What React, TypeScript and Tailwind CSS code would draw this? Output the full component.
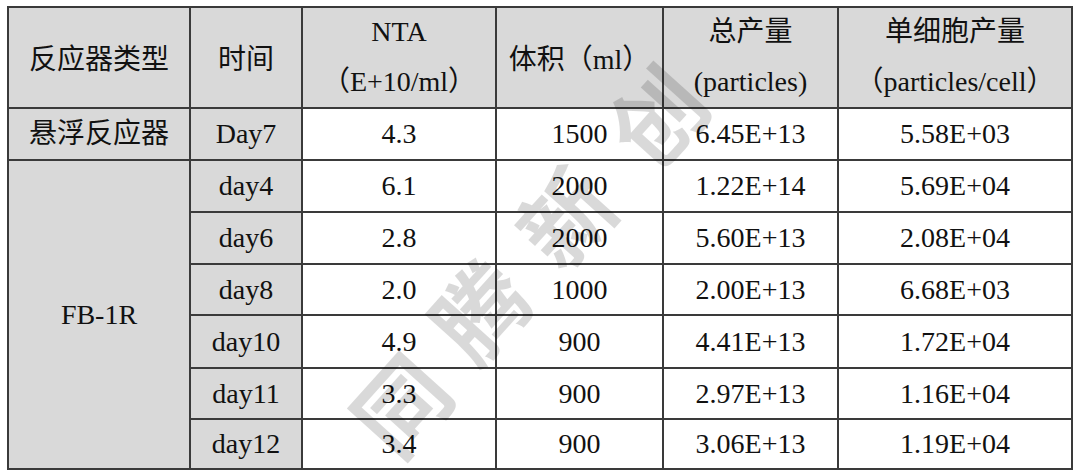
import React from "react";

const font = "font-['Liberation_Serif','Noto_Sans_CJK_SC',serif]";

const rows = [
  { t: "day4", n: "6.1", v: "2000", p: "1.22E+14", c: "5.69E+04", h: "h-[52px]" },
  { t: "day6", n: "2.8", v: "2000", p: "5.60E+13", c: "2.08E+04", h: "h-[52px]" },
  { t: "day8", n: "2.0", v: "1000", p: "2.00E+13", c: "6.68E+03", h: "h-[51px]" },
  { t: "day10", n: "4.9", v: "900", p: "4.41E+13", c: "1.72E+04", h: "h-[53px]" },
  { t: "day11", n: "3.3", v: "900", p: "2.97E+13", c: "1.16E+04", h: "h-[51px]" },
  { t: "day12", n: "3.4", v: "900", p: "3.06E+13", c: "1.19E+04", h: "h-[50px]" },
];

const td = "border-2 border-[#3a3a3a] p-0 text-center align-middle whitespace-nowrap";
const gray = "bg-[#d9d9d9]";

const marks = [
  { ch: "同", x: 398, y: 402 },
  { ch: "腾", x: 477, y: 308 },
  { ch: "新", x: 563, y: 214 },
  { ch: "创", x: 654, y: 114 },
];

export default function App() {
  return (
    <div className={`relative w-[1080px] h-[473px] bg-white overflow-hidden ${font} text-[#111]`}>
      <div className="pt-[6px] pl-[7px]">
        <table className="border-collapse table-fixed w-[1064px] text-[28px]">
          <colgroup>
            <col className="w-[182px]" />
            <col className="w-[112px]" />
            <col className="w-[194px]" />
            <col className="w-[167px]" />
            <col className="w-[175px]" />
            <col className="w-[234px]" />
          </colgroup>
          <tbody>
            <tr className={`h-[101px] ${gray} leading-[50px]`}>
              <td className={td}>
                <div className="mt-[4px]">反应器类型</div>
              </td>
              <td className={td}>
                <div className="mt-[4px]">时间</div>
              </td>
              <td className={td}>
                <div className="-mt-[2px]">NTA</div>
                <div>（E+10/ml）</div>
              </td>
              <td className={td}>
                <div className="mt-[4px]">体积（ml）</div>
              </td>
              <td className={td}>
                <div className="-mt-[2px]">总产量</div>
                <div>(particles)</div>
              </td>
              <td className={td}>
                <div className="-mt-[2px]">单细胞产量</div>
                <div>（particles/cell）</div>
              </td>
            </tr>
            <tr className="h-[52px]">
              <td className={`${td} ${gray}`}>悬浮反应器</td>
              <td className={`${td} ${gray}`}>Day7</td>
              <td className={td}>4.3</td>
              <td className={td}>1500</td>
              <td className={td}>6.45E+13</td>
              <td className={td}>5.58E+03</td>
            </tr>
            {rows.map((r, i) => (
              <tr key={r.t} className={r.h}>
                {i === 0 && (
                  <td rowSpan={6} className={`${td} ${gray}`}>
                    FB-1R
                  </td>
                )}
                <td className={`${td} ${gray}`}>{r.t}</td>
                <td className={td}>{r.n}</td>
                <td className={td}>{r.v}</td>
                <td className={td}>{r.p}</td>
                <td className={td}>{r.c}</td>
              </tr>
            ))}
          </tbody>
        </table>
      </div>
      {marks.map((m) => (
        <span
          key={m.ch}
          className="pointer-events-none absolute w-[130px] h-[130px] -ml-[65px] -mt-[65px] flex items-center justify-center text-[92px] leading-none font-bold font-['Noto_Sans_CJK_SC',sans-serif] text-black/[0.15] -rotate-[48deg]"
          style={{ left: m.x, top: m.y }}
        >
          {m.ch}
        </span>
      ))}
    </div>
  );
}
